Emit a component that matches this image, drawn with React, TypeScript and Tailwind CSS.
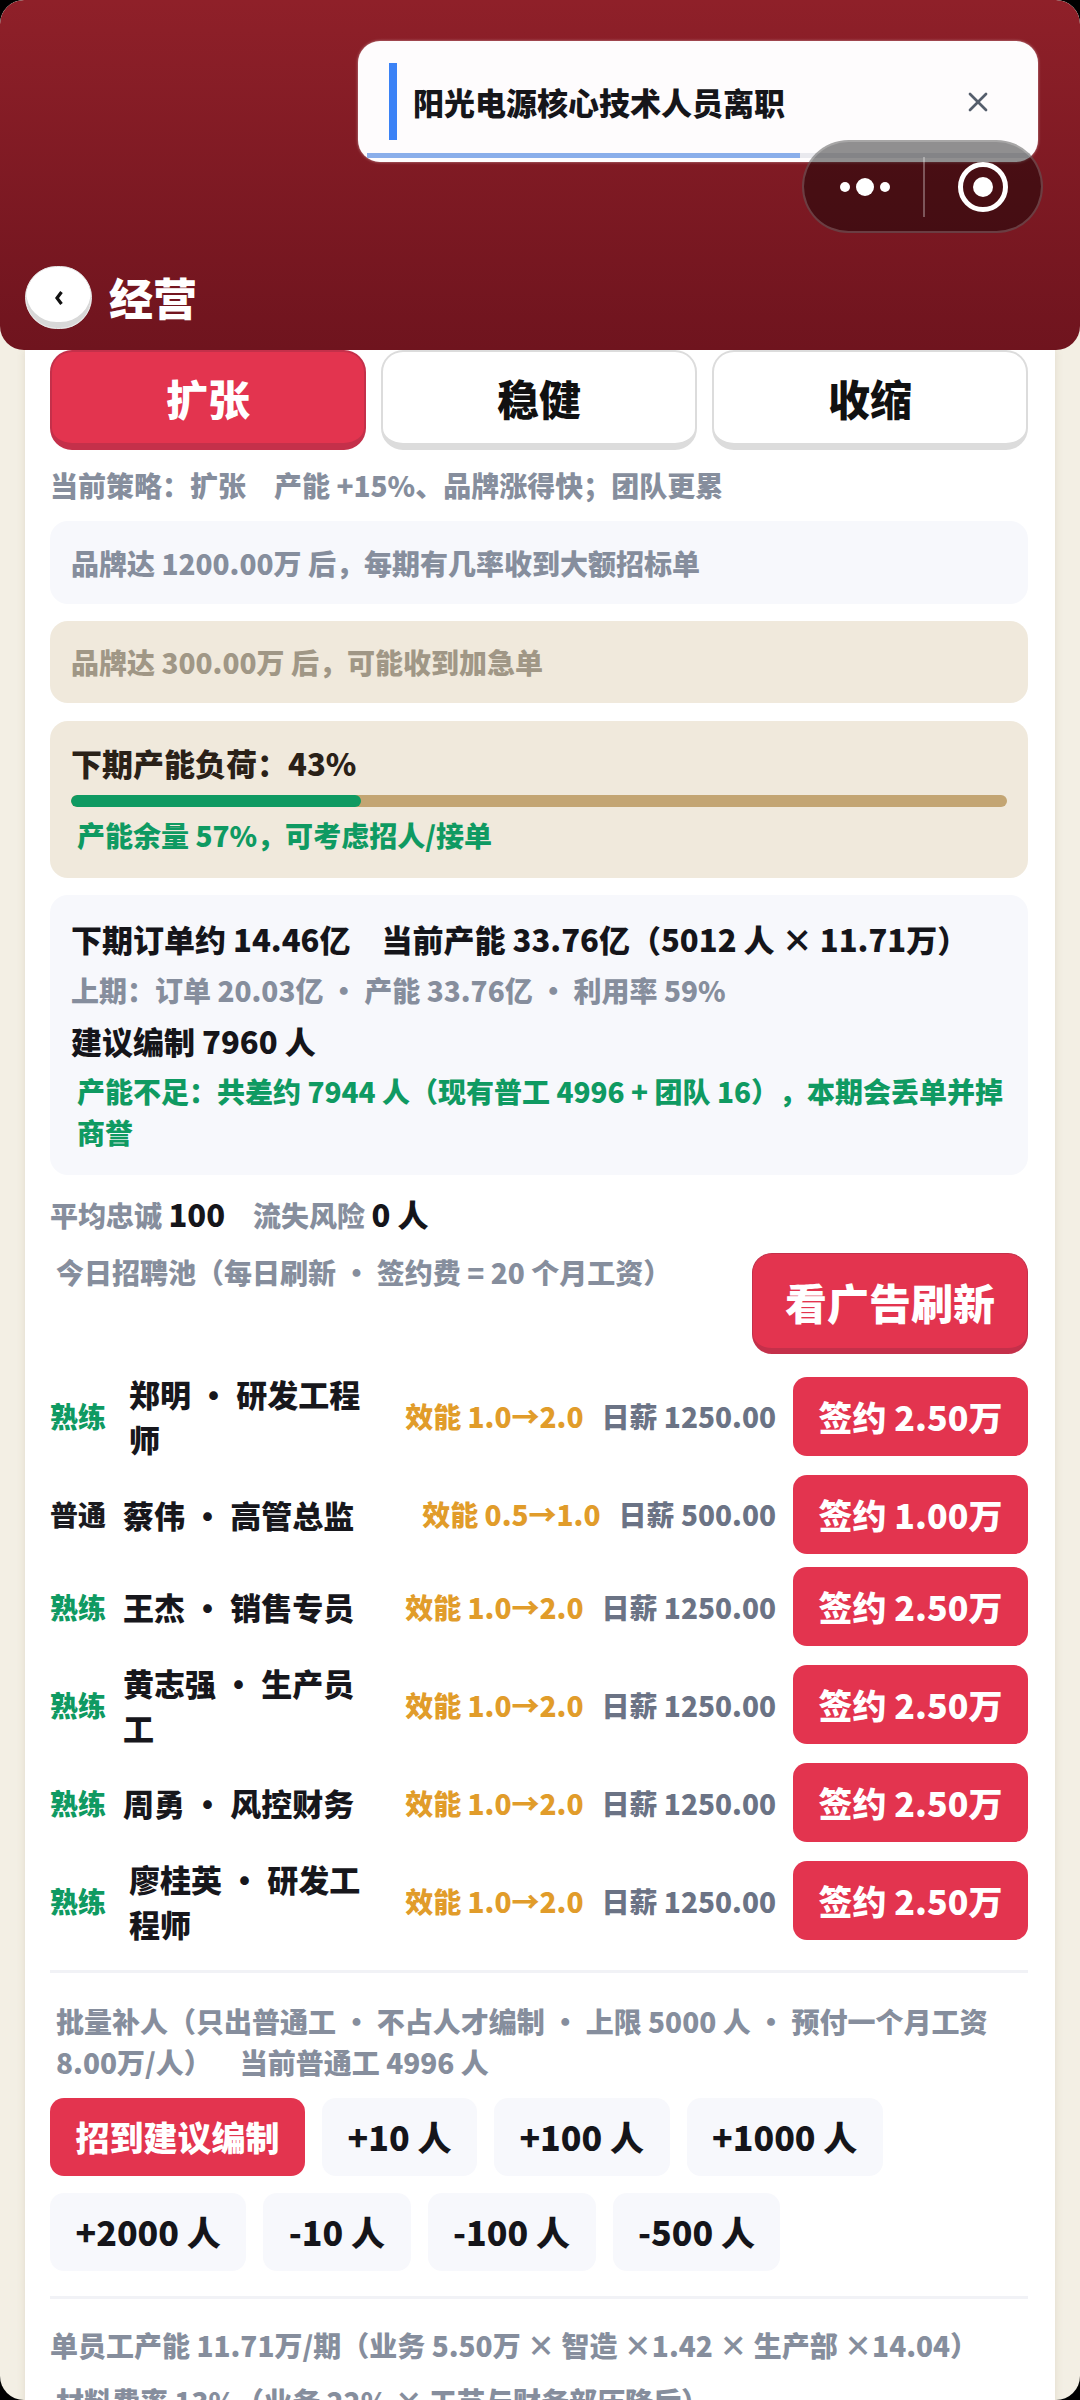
import React from 'react';
import { X } from 'lucide-react';

const FONT = '"Noto Sans CJK SC", "Noto Sans", sans-serif';

interface Candidate {
  tag: string;
  tagClass: string;
  name: string;
  nameClass: string;
  effect: string;
  wage: string;
  fee: string;
}

const CANDIDATES: Candidate[] = [
  { tag: '熟练', tagClass: 'text-[#0f9a62]', name: '郑明 · 研发工程师', nameClass: 'pl-[6px]', effect: '效能 1.0→2.0', wage: '日薪 1250.00', fee: '签约 2.50万' },
  { tag: '普通', tagClass: 'text-[#1b1b1f]', name: '蔡伟 · 高管总监', nameClass: '', effect: '效能 0.5→1.0', wage: '日薪 500.00', fee: '签约 1.00万' },
  { tag: '熟练', tagClass: 'text-[#0f9a62]', name: '王杰 · 销售专员', nameClass: '', effect: '效能 1.0→2.0', wage: '日薪 1250.00', fee: '签约 2.50万' },
  { tag: '熟练', tagClass: 'text-[#0f9a62]', name: '黄志强 · 生产员工', nameClass: '', effect: '效能 1.0→2.0', wage: '日薪 1250.00', fee: '签约 2.50万' },
  { tag: '熟练', tagClass: 'text-[#0f9a62]', name: '周勇 · 风控财务', nameClass: '', effect: '效能 1.0→2.0', wage: '日薪 1250.00', fee: '签约 2.50万' },
  { tag: '熟练', tagClass: 'text-[#0f9a62]', name: '廖桂英 · 研发工程师', nameClass: 'pl-[6px]', effect: '效能 1.0→2.0', wage: '日薪 1250.00', fee: '签约 2.50万' },
];

const Strategy = ({ label, active }: { label: string; active?: boolean }) => (
  <button
    className={`flex-1 h-[100px] rounded-[22px] flex items-center justify-center text-[42px] font-black border-2 border-b-[7px] ${
      active ? 'bg-[#e3344f] text-white border-[#c4304a]' : 'bg-white text-[#111] border-[#dcdcdc]'
    }`}
  >
    {label}
  </button>
);

const Batch = ({ label, primary }: { label: string; primary?: boolean }) => (
  <button
    className={`h-[78px] rounded-[14px] px-[25.5px] text-[34px] font-black ${
      primary ? 'bg-[#e3344f] text-white' : 'bg-[#f7f8fc] text-[#15151a]'
    }`}
  >
    {label}
  </button>
);

export default function App() {
  return (
    <div className="w-[1080px] h-[2400px] bg-black">
      <div
        className="relative w-[1080px] h-[2400px] rounded-[24px] overflow-hidden bg-[#f3efe4] [text-spacing-trim:space-all]"
        style={{ fontFamily: FONT }}
      >
        {/* Top bar */}
        <div className="relative z-10 h-[350px] rounded-[24px] bg-gradient-to-b from-[#8f2029] to-[#6f141e] px-[25px] pb-[21px] flex items-end gap-[17px]">
          <div className="w-[67px] h-[63px] rounded-full bg-white border border-[#e6e6e6] shadow-[inset_0_-6px_0_#d8d8d8] flex items-center justify-center">
            <svg width="10" height="16" viewBox="0 0 10 16" fill="none">
              <path d="M7.5 2 L3 8 L7.5 14" stroke="#111" strokeWidth="3.2" />
            </svg>
          </div>
          <div className="text-[44px] leading-[63px] font-black text-white">经营</div>
        </div>

        {/* Toast */}
        <div className="absolute z-20 left-[358px] top-[41px] w-[680px] h-[121px] rounded-[22px] bg-[#fefcfd] shadow-[0_0_3px_rgba(255,255,255,0.5)] overflow-hidden">
          <div className="absolute left-[31px] top-[22px] w-[8px] h-[77px] bg-[#3b82f6]" />
          <div className="absolute left-[55px] top-[36px] text-[31px] leading-[50px] font-black text-[#16161a]">阳光电源核心技术人员离职</div>
          <X className="absolute left-[604px] top-[45px] text-[#555e6c]" size={32} strokeWidth={2} />
          <div className="absolute left-[9px] right-[8px] top-[112px] h-[5px] bg-[#e9e9ee]">
            <div className="w-[433px] h-full bg-[#8aaeea]" />
          </div>
        </div>

        {/* Mini program capsule */}
        <div className="absolute z-30 left-[802px] top-[140px] w-[241px] h-[93px] rounded-full bg-black/[0.43] border-2 border-white/20 flex items-center">
          <div className="w-[119px] pl-[2px] flex items-center justify-center gap-[6px]">
            <span className="w-[10px] h-[10px] rounded-full bg-white" />
            <span className="w-[18px] h-[18px] rounded-full bg-white" />
            <span className="w-[10px] h-[10px] rounded-full bg-white" />
          </div>
          <div className="w-[2px] h-[60px] bg-white/30" />
          <div className="flex-1 flex items-center justify-center">
            <div className="w-[50px] h-[50px] rounded-full border-[5px] border-white flex items-center justify-center">
              <span className="w-[20px] h-[20px] rounded-full bg-white" />
            </div>
          </div>
        </div>

        {/* Panel */}
        <div className="mx-[25px] bg-white pl-[25px] pr-[27px] flex flex-col shadow-[0_0_8px_rgba(120,100,60,0.15)]">
          <div className="flex gap-[15px]">
            <Strategy label="扩张" active />
            <Strategy label="稳健" />
            <Strategy label="收缩" />
          </div>

          <div className="mt-[14px] text-[28px] leading-[42px] font-black text-[#868e9d] whitespace-pre">当前策略：扩张　产能 +15%、品牌涨得快；团队更累</div>

          <div className="mt-[15px] h-[83px] rounded-[18px] bg-[#f7f8fc] px-[21px] flex items-center text-[28px] font-black text-[#868e9d]">
            品牌达 1200.00万 后，每期有几率收到大额招标单
          </div>
          <div className="mt-[17px] h-[82px] rounded-[18px] bg-[#f0e9dc] px-[21px] flex items-center text-[28px] font-black text-[#a09786]">
            品牌达 300.00万 后，可能收到加急单
          </div>

          <div className="mt-[18px] h-[157px] rounded-[18px] bg-[#f0e9dc] px-[21px] pt-[19px]">
            <div className="text-[31px] leading-[46px] font-black text-[#2a2118]">下期产能负荷：43%</div>
            <div className="mt-[9px] h-[12px] rounded-full bg-[#c3a573] overflow-hidden">
              <div className="w-[290px] h-full rounded-full bg-[#0f9a62]" />
            </div>
            <div className="mt-[7px] pl-[6px] text-[28px] leading-[42px] font-black text-[#0f9a62]">产能余量 57%，可考虑招人/接单</div>
          </div>

          <div className="mt-[17px] h-[280px] rounded-[18px] bg-[#f7f8fc] px-[21px] pt-[19px]">
            <div className="text-[31px] leading-[50px] font-black text-[#15151a] whitespace-pre">下期订单约 14.46亿　当前产能 33.76亿（5012 人 × 11.71万）</div>
            <div className="text-[28px] leading-[52px] font-black text-[#868e9d]">上期：订单 20.03亿 · 产能 33.76亿 · 利用率 59%</div>
            <div className="text-[31px] leading-[50px] font-black text-[#15151a]">建议编制 7960 人</div>
            <div className="mt-[5px] pl-[6px] text-[28px] leading-[41px] font-black text-[#0f9a62]">产能不足：共差约 7944 人（现有普工 4996 + 团队 16），本期会丢单并掉商誉</div>
          </div>

          <div className="mt-[17px] text-[28px] leading-[44px] font-black text-[#868e9d] whitespace-pre">
            平均忠诚 <span className="text-[31px] text-[#15151a]">100</span>　流失风险 <span className="text-[31px] text-[#15151a]">0 人</span>
          </div>

          <div className="mt-[16px] flex items-start justify-between">
            <div className="pl-[6px] text-[28px] leading-[38px] font-black text-[#868e9d]">今日招聘池（每日刷新 · 签约费 = 20 个月工资）</div>
            <button className="w-[276px] h-[101px] rounded-[20px] bg-[#e3344f] border border-[#c4304a] border-b-[6px] text-[42px] font-black text-white">看广告刷新</button>
          </div>

          <div className="mt-[17px] flex flex-col gap-[13.5px]">
            {CANDIDATES.map((c, i) => (
              <div key={i} className="flex items-center min-h-[78px]">
                <div className={`w-[56px] shrink-0 text-[28px] font-black ${c.tagClass}`}>{c.tag}</div>
                <div className={`ml-[17px] w-[239px] shrink-0 text-[31px] leading-[45px] font-black text-[#17171c] ${c.nameClass}`}>{c.name}</div>
                <div className="flex-1 flex justify-end gap-[18px] whitespace-nowrap text-[28px] font-black">
                  <span className="text-[#e19c2a]">{c.effect}</span>
                  <span className="text-[#6b7385]">{c.wage}</span>
                </div>
                <button className="ml-[17px] w-[235px] h-[79px] shrink-0 rounded-[14px] bg-[#e3344f] text-[34px] font-black text-white">{c.fee}</button>
              </div>
            ))}
          </div>

          <div className="mt-[24px] h-[3px] bg-[#f1f2f6]" />

          <div className="mt-[28px] pl-[6px] text-[28px] leading-[41px] font-black text-[#868e9d]">
            批量补人（只出普通工 · 不占人才编制 · 上限 5000 人 · 预付一个月工资 8.00万/人）　当前普通工 4996 人
          </div>

          <div className="mt-[15px] flex flex-wrap gap-[17px]">
            <Batch label="招到建议编制" primary />
            <Batch label="+10 人" />
            <Batch label="+100 人" />
            <Batch label="+1000 人" />
            <Batch label="+2000 人" />
            <Batch label="-10 人" />
            <Batch label="-100 人" />
            <Batch label="-500 人" />
          </div>

          <div className="mt-[25px] h-[3px] bg-[#f1f2f6]" />

          <div className="mt-[25px] text-[28px] leading-[42px] font-black text-[#868e9d]">单员工产能 11.71万/期（业务 5.50万 × 智造 ×1.42 × 生产部 ×14.04）</div>
          <div className="mt-[14px] pl-[6px] text-[28px] leading-[42px] font-black text-[#868e9d]">材料费率 13%（业务 22% × 工艺与财务部压降后）</div>
        </div>
      </div>
    </div>
  );
}
